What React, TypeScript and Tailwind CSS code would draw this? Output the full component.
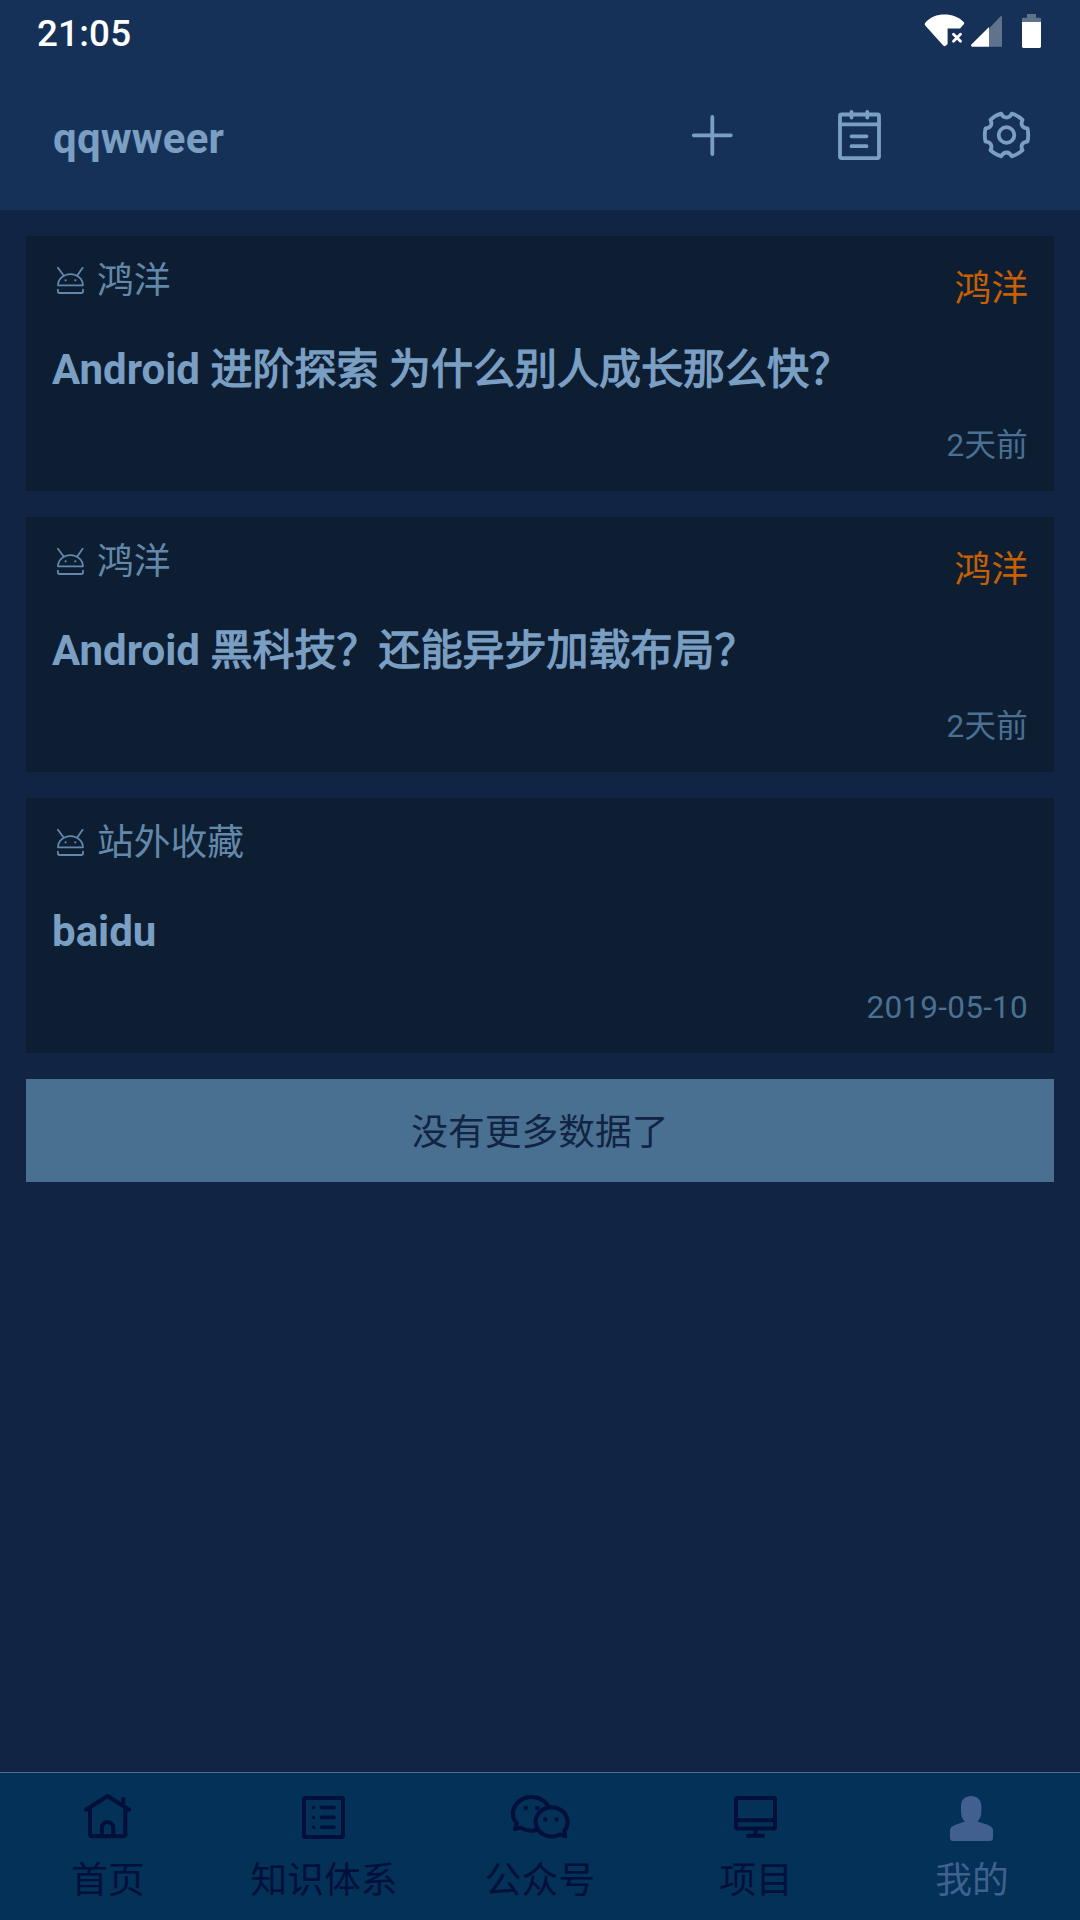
import type { ReactNode } from "react";

type Article = { source: string; tag?: string; title: string; time: string };

const articles: Article[] = [
  { source: "鸿洋", tag: "鸿洋", title: "Android 进阶探索 为什么别人成长那么快？", time: "2天前" },
  { source: "鸿洋", tag: "鸿洋", title: "Android 黑科技？还能异步加载布局？", time: "2天前" },
  { source: "站外收藏", title: "baidu", time: "2019-05-10" },
];

function StatusIcons() {
  return (
    <svg width="120" height="40" viewBox="0 0 120 40" fill="#fff" overflow="visible">
      <path d="M4.9 13.2C10 7 17 4.5 24.5 4.5S39 7 43.9 12.2Q44.6 13 44 14L40 18.5H27.6V34L26 35.6Q24.6 37 23.2 35.6L5.2 15.6Q4.3 14.3 4.9 13.2Z" />
      <path d="M33.5 24.2L40.5 31.2M40.5 24.2L33.5 31.2" stroke="#fff" strokeWidth="2.8" strokeLinecap="round" />
      <path d="M69 18.6L80.4 6.6Q82 5.4 82 7.2V36.8H69Z" fillOpacity=".32" />
      <path d="M69 17V36.8H52Q50.4 36 51.4 34.6Z" />
      <path d="M102 12V9.2Q102 7.8 103.4 7.8H107V4H116V7.8H119.6Q121 7.8 121 9.2V12Z" fillOpacity=".32" />
      <path d="M102 12H121V36.2Q121 38 119.6 38H103.4Q102 38 102 36.2Z" />
    </svg>
  );
}

function ToolIcon({ children }: { children: ReactNode }) {
  return (
    <div className="flex w-[147px] justify-center pt-[43px]">
      <svg width="61" height="60" viewBox="0 0 61 60" fill="none" stroke="#7a9fc3" strokeWidth="3.8" strokeLinecap="round" strokeLinejoin="round">
        {children}
      </svg>
    </div>
  );
}

function AndroidIcon() {
  return (
    <svg className="mt-[5px] ml-[5px]" width="27" height="27" viewBox="0 0 27 27" fill="none" stroke="#6388aa" strokeWidth="1.8" strokeLinecap="round" strokeLinejoin="round">
      <path d="M.9 .7L6.3 8M25.6 .7L20.6 8M1 18.3A12.4 11.2 0 0 1 25.9 18.3ZM.9 22.6V24.3Q.9 26 2.6 26H24.3Q26 26 26 24.3V22.6" />
      <circle cx="8.6" cy="13.3" r="1.1" fill="#6388aa" stroke="none" />
      <circle cx="18.3" cy="13.3" r="1.1" fill="#6388aa" stroke="none" />
    </svg>
  );
}

/* Latin runs use the bold face; Chinese runs use the regular face thickened by a stroke. */
function Title({ text }: { text: string }) {
  return (
    <h2 className="h-[84px] text-[42px] leading-[66px] font-bold whitespace-nowrap text-[#7a9fc3]">
      {text.split(/([\u3000-\uffef]+)/).map((run, i) =>
        i % 2 ? (
          <span key={i} className="font-normal [-webkit-text-stroke:1.3px_#7a9fc3]">
            {run}
          </span>
        ) : (
          run
        ),
      )}
    </h2>
  );
}

function Card({ source, tag, title, time }: Article) {
  return (
    <article className="flex h-[255px] flex-col bg-[#0d1e33] px-[26px]">
      <div className="flex h-[101px] justify-between">
        <div className="flex pt-[26px]">
          <AndroidIcon />
          <span className="ml-[13px] -mt-[3px] text-[36.75px] leading-[44px] text-[#6388aa]">{source}</span>
        </div>
        {tag && <span className="pt-[31px] text-[36.75px] leading-[44px] text-[#c66000]">{tag}</span>}
      </div>
      <Title text={title} />
      <time className="self-end text-[31.5px] leading-[50px] tracking-[0.25px] text-[#4a7093]">{time}</time>
    </article>
  );
}

function NavItem({ label, active, children }: { label: string; active?: boolean; children: ReactNode }) {
  return (
    <button className={active ? "flex flex-col items-center pt-[14px] text-[#41608f]" : "flex flex-col items-center pt-[14px] text-[#00103a]"}>
      <svg width="60" height="60" viewBox="0 0 60 60" fill="none" stroke="currentColor" strokeWidth="4" strokeLinecap="round" strokeLinejoin="round">
        {children}
      </svg>
      <span className="mt-[12px] text-[36.75px] leading-[44px]">{label}</span>
    </button>
  );
}

export default function App() {
  return (
    <div className="flex h-[1920px] w-[1080px] flex-col overflow-hidden bg-[#112444] font-[Roboto,'Noto_Sans_CJK_SC',sans-serif]">
      <header className="h-[210px] bg-[#163158]">
        <div className="flex h-[63px] justify-between pt-[10px] pr-[40px] pl-[37px]">
          <span className="pt-px text-[36.75px] leading-[46px] font-medium tracking-[0.2px] text-white">21:05</span>
          <StatusIcons />
        </div>
        <div className="flex h-[147px] pl-[53px]">
          <h1 className="grow pt-[51px] text-[42px] leading-[50px] font-bold tracking-[0.2px] text-[#7a9fc3]">qqwweer</h1>
          <ToolIcon>
            <path d="M30.3 11V48M11.8 29.3H48.8" />
          </ToolIcon>
          <ToolIcon>
            <rect x="11" y="8.5" width="39" height="43.6" rx="1.5" />
            <path d="M11 18.4H50M22.5 5.8V11.5M38.3 5.8V11.5M22.5 30.3H37.5M22.5 40.2H37.5" />
          </ToolIcon>
          <ToolIcon>
            <g transform="translate(30.5 29)">
              <circle r="7.8" />
              <path d="M5.2 -21.3Q11.5 -19.6 16 -15.2C13.6 -10.5 16 -6.8 21 -6.7Q22.4 0 21 6.7C16 6.8 13.6 10.5 16 15.2Q11.5 19.6 5.2 21.3C2.8 16.2 -2.8 16.2 -5.2 21.3Q-11.5 19.6 -16 15.2C-13.6 10.5 -16 6.8 -21 6.7Q-22.4 0 -21 -6.7C-16 -6.8 -13.6 -10.5 -16 -15.2Q-11.5 -19.6 -5.2 -21.3C-2.8 -16.2 2.8 -16.2 5.2 -21.3Z" />
            </g>
          </ToolIcon>
        </div>
      </header>
      <main className="flex grow flex-col gap-[26px] px-[26px] pt-[26px]">
        {articles.map((a) => (
          <Card key={a.title} {...a} />
        ))}
        <div className="h-[103px] bg-[#4a7091] pt-[2px] text-center text-[36.75px] leading-[103px] text-[#112444]">没有更多数据了</div>
      </main>
      <nav className="grid h-[148px] grid-cols-5 border-t border-[#4a7091] bg-[#033157]">
        <NavItem label="首页">
          <path d="M8 22.7L29.6 9L51 22.7M12 21V47.2Q12 49.3 14 49.3H45.3Q47.3 49.3 47.3 47.2V21M45.3 12V18M24 49V40.5A5.6 5.6 0 0 1 35.2 40.5V49" />
        </NavItem>
        <NavItem label="知识体系">
          <rect x="10" y="11" width="39" height="39" rx="1.5" />
          <path d="M27.5 20.5H40M27.5 30.4H40M27.5 40.3H40M19.5 20.5h.01M19.5 30.4h.01M19.5 40.3h.01" strokeWidth="3.6" />
        </NavItem>
        <NavItem label="公众号">
          <path d="M26 43.3Q17.5 44.8 10.5 40.6L4.8 42L6.9 36.4C4.2 33.8 2.9 30 2.9 26.5A18.7 17.2 0 0 1 38.6 20" />
          <path d="M54.3 43.8A16 14.5 0 1 0 49.8 47.4L55.2 49.2Z" />
          <g fill="currentColor" stroke="none">
            <circle cx="15.8" cy="21" r="2.2" />
            <circle cx="27.3" cy="21" r="2.2" />
            <circle cx="35.2" cy="32.4" r="2.2" />
            <circle cx="46.6" cy="32.4" r="2.2" />
          </g>
        </NavItem>
        <NavItem label="项目">
          <rect x="10" y="11" width="39" height="30.6" rx="1.5" />
          <path d="M10 33.3H49M29.5 42V48M22 48.8H37" />
        </NavItem>
        <NavItem label="我的" active>
          <path d="M19 19.5C19 12.5 23 9 29 9S39.4 12.5 39.4 19.5C39.4 27.5 39.4 30.5 35.6 34.4L45.5 37.8Q51 40 51 43V51Q51 54 48 54H11Q8 54 8 51V43Q8 40 13.5 37.8L22.8 34.4C19 30.5 19 27.5 19 19.5Z" fill="currentColor" stroke="none" />
        </NavItem>
      </nav>
    </div>
  );
}
